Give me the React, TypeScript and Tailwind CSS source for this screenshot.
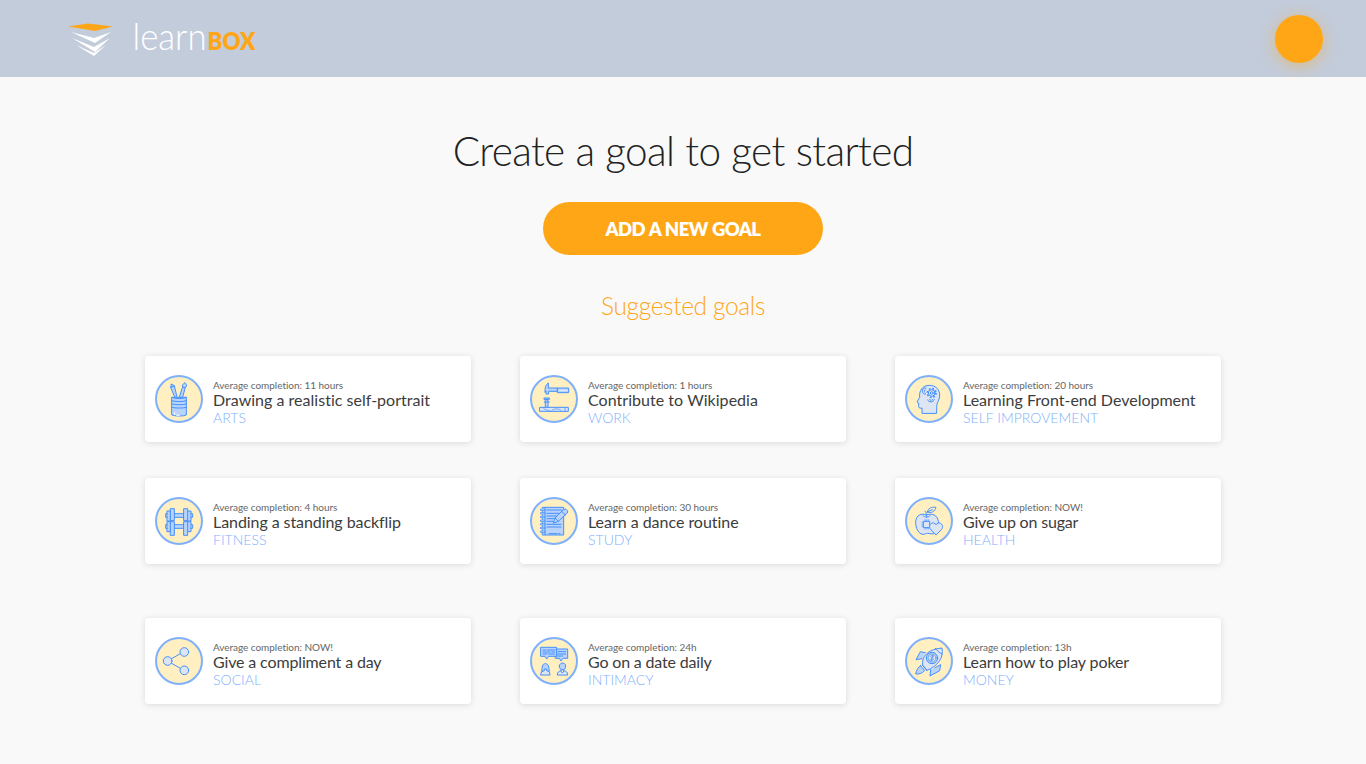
import type { ReactNode } from "react";

const blue = "#4590fb";
const pale = "#b9d3fb";
const haze = "#dde4f2";

const icons: Record<string, ReactNode> = {
  arts: (
    <g>
      <path d="M74 81 62 52l2-10 9 5 8 34zM88 81l9-28 9-1-8 29z" fill={pale} />
      <path d="M98 50c-3-5 2-9 7-12 4 4 6 8 3 13-3 3-7 2-10-1Z" fill={pale} />
      <path d="M62 52l11-4" />
      <path d="M66 82h43v53c-6 4-36 4-43 0z" fill={pale} />
      <path d="M66 82c8 5 35 5 43 0M66 92c8 4 35 4 43 0M66 102c10 3 33 3 43 0M66 112c10 3 33 3 43 0" />
      <path d="M74 134v-6M80 136h8" stroke="#fff" />
    </g>
  ),
  work: (
    <g>
      <path d="M60 66c-1-12 2-22 10-27v15h28v10H71v8h-8v-8z" fill={pale} />
      <path d="M98 54h33v14H98z" fill={pale} />
      <path d="M104 61h22" stroke="#fff" strokeWidth="2" />
      <path d="M58 84h15v4H58zM62 89h7v23h-7zM58 96h15" fill={pale} />
      <path d="M45 112h85v12H45z" fill={haze} />
      <path d="M54 113c4 7 11 6 21 10M80 122c10-9 24-6 29 0M120 113v11" strokeWidth="2" />
    </g>
  ),
  mind: (
    <g>
      <path d="M66 129v-15c-8 2-11-1-10-9v-6l-5-3 8-14c-2-20 8-36 29-36 20 0 32 14 31 32-1 14-9 20-9 31v20z" fill={haze} />
      <circle cx="95" cy="69" r="13" strokeDasharray="5.2 5" strokeWidth="5" strokeLinecap="butt" />
      <circle cx="95" cy="69" r="10" fill={haze} />
      <circle cx="95" cy="69" r="4" />
      <path d="M78 54c-8-1-12 4-11 10 1 7 6 10 10 8M76 60c-4 0-5 4-2 7M83 90c3 8 17 8 20-1M89 88c2 5 7 4 9 0" />
    </g>
  ),
  fitness: (
    <g>
      <path d="M73 65h29v11H73zM73 98h29v11H73z" fill={pale} />
      <path d="M52 57h10v30H52zM52 89h10v30H52zM113 57h10v30h-10zM113 89h10v30h-10z" fill={pale} />
      <path d="M62 50h11v36H62zM62 89h11v41H62zM102 50h11v36h-11zM102 89h11v41h-11z" fill={pale} />
      <path d="M52 65h-5v11h5M52 98h-5v11h5M123 65h5v11h-5M123 98h5v11h-5" />
    </g>
  ),
  study: (
    <g>
      <path d="M53 46h63v83H53z" fill={pale} />
      <path d="M60 47v81" />
      <path d="M48 53h10M48 64h10M48 75h10M48 86h10M48 97h10M48 108h10M48 119h10" strokeWidth="6" />
      <path d="M49 53h8M49 64h8M49 75h8M49 86h8M49 97h8M49 108h8M49 119h8" stroke={haze} strokeWidth="2" />
      <path d="M66 54h43M66 64h36M66 72h29M66 80h22M66 88h17M66 97h42M66 105h42M72 125h24" />
      <path d="m85 92 5-14 25-25c6-5 16 2 12 10l-27 25z" fill={pale} />
      <path d="m90 78 10 10M109 57l12 12M101 125h4" />
    </g>
  ),
  health: (
    <g>
      <path d="M79 69c-14-7-30 0-32 19-1 20 9 39 22 39 6 0 9-3 13-3 8 0 16 4 22 0 10-8 13-22 11-36-2-19-20-26-36-19Z" fill={haze} />
      <path d="M75 57c5 4 4 12 5 18M69 71c6 6 15 6 21 0M82 60c2-11 12-16 26-14-3 12-14 19-26 14Zm0 0 15-7" />
      <path d="M71 88h18v19H71z" fill={haze} />
      <path d="M75 87v-4M80 87v-4M85 87v-4M75 107v4M80 107v4M85 107v4M70 92h-4M70 98h-4M70 103h-4" strokeWidth="2" />
      <path d="M107 128 92 112c-10-13 6-27 16-14 10-13 27 1 17 14z" fill={haze} />
    </g>
  ),
  social: (
    <g>
      <path d="M63 81 91 65M63 93l28 16" />
      <circle cx="53" cy="87" r="13" fill={haze} />
      <circle cx="103" cy="60" r="13" fill={haze} />
      <circle cx="103" cy="115" r="13" fill={haze} />
    </g>
  ),
  intimacy: (
    <g>
      <path d="M48 46h47v27H71l-6 8-5-8H48z" fill={pale} />
      <path d="M95 51h33v28h-14l-6 8-5-8H91v-6h4z" fill={pale} />
      <path d="M54 54h9M67 54h22M54 60h21M80 60h9M54 66h12M71 66h18M99 59h23M99 66h23M99 72h14" />
      <path d="M50 117c2-12 1-22 11-22s10 10 12 22z" fill={pale} />
      <path d="M47 128c0-9 5-10 11-12v-5h7v5c6 2 10 3 10 12z" fill={haze} />
      <path d="M103 102c0-12 19-12 19 0 0 17-19 17-19 0Z" fill={pale} />
      <path d="M97 128c0-9 5-10 12-12v-3h7v3c7 2 12 3 12 12zM108 118l4 5 4-5" fill={haze} />
    </g>
  ),
  money: (
    <g>
      <path d="M76 62 61 59 48 83l18-3M105 107l17-9-3 18-29 16 2-19" fill={pale} />
      <path d="M68 99c-4-26 15-47 58-51 6 29-13 55-45 67z" fill={haze} />
      <path d="M106 49c6 8 13 14 20 17M68 99l13 16M62 101l12 15c-8 9-18 11-27 10 2-10 6-20 15-25Z" fill={pale} />
      <circle cx="96" cy="78" r="17" fill={pale} />
      <circle cx="96" cy="78" r="12" fill={haze} strokeWidth="2" />
      <path d="M101 73c-4-5-11-3-8 3 2 3 7 2 7 6-1 5-8 4-10 0M100 69l-7 18" strokeWidth="2.5" />
    </g>
  ),
};

const goals = [
  { icon: "arts", time: "11 hours", title: "Drawing a realistic self-portrait", tag: "ARTS", tracking: "tracking-[0.02px]" },
  { icon: "work", time: "1 hours", title: "Contribute to Wikipedia", tag: "WORK", tracking: "tracking-[0.04px]" },
  { icon: "mind", time: "20 hours", title: "Learning Front-end Development", tag: "SELF IMPROVEMENT", tracking: "tracking-normal" },
  { icon: "fitness", time: "4 hours", title: "Landing a standing backflip", tag: "FITNESS", tracking: "tracking-[-0.07px]" },
  { icon: "study", time: "30 hours", title: "Learn a dance routine", tag: "STUDY", tracking: "tracking-[-0.03px]" },
  { icon: "health", time: "NOW!", title: "Give up on sugar", tag: "HEALTH", tracking: "tracking-[-0.18px]" },
  { icon: "social", time: "NOW!", title: "Give a compliment a day", tag: "SOCIAL", tracking: "tracking-[-0.14px]" },
  { icon: "intimacy", time: "24h", title: "Go on a date daily", tag: "INTIMACY", tracking: "tracking-[-0.17px]" },
  { icon: "money", time: "13h", title: "Learn how to play poker", tag: "MONEY", tracking: "tracking-[-0.1px]" },
];

function GoalCard({ goal }: { goal: (typeof goals)[number] }) {
  return (
    <article className="flex h-[86px] items-center rounded bg-white px-2.5 shadow-[0_1px_6px_rgba(0,0,0,0.13)]">
      <div className="size-12 shrink-0 overflow-hidden rounded-full border-2 border-[#7fb0fb] bg-[#ffefc1]">
        <svg className="size-11" viewBox="21 21 132 132" fill="none" stroke={blue} strokeWidth="3" strokeLinejoin="round" strokeLinecap="round">
          {icons[goal.icon]}
        </svg>
      </div>
      <div className="ml-2.5 pt-1.5 whitespace-nowrap">
        <p className="text-[10px] leading-3 tracking-[-0.04px] text-[#666]">Average completion: {goal.time}</p>
        <h3 className={`text-base leading-[18px] text-[#3c3c3c] ${goal.tracking}`}>{goal.title}</h3>
        <p className="text-sm leading-[17px] font-light tracking-[0.03px] text-[#7fb0fb]">{goal.tag}</p>
      </div>
    </article>
  );
}

export default function App() {
  return (
    <div className="min-h-[764px] bg-[#f9f9f9] font-['Lato',sans-serif] antialiased [font-variant-ligatures:none]">
      <header className="flex h-[77px] items-start justify-between bg-[#c3ccdb] pr-[43px] pl-[68px]">
        <svg className="mt-3 h-[52px] w-[200px]" viewBox="0 0 200 52">
          <path d="M0 14.5 20 11.5 45 14.5 27 19z" fill="#ffa617" />
          <path d="m3 20 23 6 17-6-16 11zM4 26l22 9 16-9-15 14zM8 33l18 8 12-8-12 11z" fill="#fff" />
          <text x="64.5" y="37.7" fontSize="37" fontWeight="300" textLength="74" lengthAdjust="spacingAndGlyphs" fill="#fff">learn</text>
          <text x="139.5" y="38" fontSize="23.5" fontWeight="800" textLength="48" lengthAdjust="spacingAndGlyphs" fill="#ffa617">BOX</text>
        </svg>
        <button aria-label="Menu" className="mt-[15px] size-12 rounded-full bg-[#ffa617] shadow-[0_3px_16px_rgba(255,166,23,0.45)]" />
      </header>
      <main className="flex flex-col items-center">
        <h1 className="mt-[49px] text-[40.5px] leading-[50px] font-light tracking-[-0.65px] [word-spacing:0.6px] text-[#222]">Create a goal to get started</h1>
        <button className="mt-[26px] h-[53px] w-[280px] rounded-full bg-[#ffa617] pt-0.5 text-[18.5px] font-extrabold tracking-[-0.6px] [word-spacing:0.6px] text-white">ADD A NEW GOAL</button>
        <h2 className="mt-[35px] text-[24.5px] leading-[31px] font-light tracking-[-0.35px] text-[#ffa617]">Suggested goals</h2>
        <section className="mt-[35px] grid grid-cols-[repeat(3,326px)] gap-x-[49px]">
          {goals.map((goal, i) => (
            <div key={goal.title} className={i < 3 ? "pb-9" : i < 6 ? "pb-[54px]" : ""}>
              <GoalCard goal={goal} />
            </div>
          ))}
        </section>
      </main>
    </div>
  );
}
